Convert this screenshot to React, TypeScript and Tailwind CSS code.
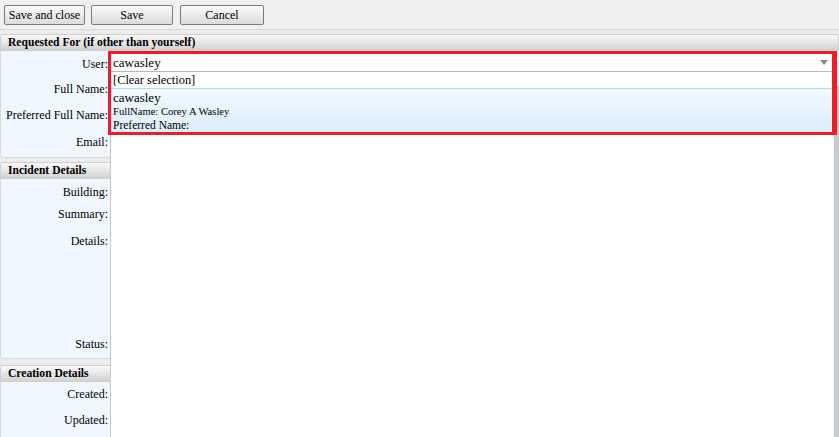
import React from 'react';

const serif = { fontFamily: '"Liberation Serif", "Times New Roman", serif' };

type RowDef = { label: string; h: number; pb?: number };

const SectionHeader: React.FC<{ title: string }> = ({ title }) => (
  <div className="h-[17px] px-[7px] flex items-center rounded-t-[3px] border border-[#cfcfcf] bg-gradient-to-b from-[#fafafa] to-[#d2d2d2] text-[11.6px] font-bold text-black leading-none">
    {title}
  </div>
);

const Row: React.FC<RowDef> = ({ label, h, pb }) => (
  <div className="flex" style={{ height: h }}>
    <div
      className={`w-[110px] shrink-0 bg-[#f0f7ff] flex ${pb !== undefined ? 'items-end' : 'items-center'} justify-end pr-[3px] text-[12px] text-black`}
      style={pb !== undefined ? { paddingBottom: pb } : undefined}
    >
      {label}
    </div>
    <div className="flex-1 bg-white" />
  </div>
);

const Section: React.FC<{ title: string; rows: RowDef[]; mt: number; border?: boolean }> = ({ title, rows, mt, border = true }) => (
  <div style={{ marginTop: mt }}>
    <SectionHeader title={title} />
    <div className={`rounded-bl-[4px] overflow-hidden border-l border-[#d8d8d8] ${border ? 'border-b' : ''}`}>
      {rows.map((r) => (
        <Row key={r.label} {...r} />
      ))}
    </div>
  </div>
);

const Btn: React.FC<{ label: string; w: number; ml: number }> = ({ label, w, ml }) => (
  <button
    className="h-[20px] border border-[#7a7a7a] rounded-[2px] bg-gradient-to-b from-[#fbfbfb] to-[#dcdcdc] text-[12px] text-black leading-none"
    style={{ width: w, marginLeft: ml }}
  >
    {label}
  </button>
);

export default function App() {
  return (
    <div className="relative w-[839px] h-[437px] overflow-hidden bg-[#ececec]" style={serif}>
      {/* toolbar */}
      <div className="h-[30px] flex items-center border-b border-[#d6d6d6] bg-[#f0f0f0]">
        <Btn label="Save and close" w={81} ml={4} />
        <Btn label="Save" w={82} ml={6} />
        <Btn label="Cancel" w={84} ml={7} />
      </div>

      <Section
        title="Requested For (if other than yourself)"
        mt={4}
        rows={[
          { label: 'User:', h: 25 },
          { label: 'Full Name:', h: 26 },
          { label: 'Preferred Full Name:', h: 26 },
          { label: 'Email:', h: 29, pb: 6 },
        ]}
      />
      <Section
        title="Incident Details"
        mt={4}
        rows={[
          { label: 'Building:', h: 26 },
          { label: 'Summary:', h: 18 },
          { label: 'Details:', h: 36 },
          { label: 'Status:', h: 99, pb: 5 },
        ]}
      />
      <Section
        title="Creation Details"
        mt={6}
        border={false}
        rows={[
          { label: 'Created:', h: 24 },
          { label: 'Updated:', h: 28 },
          { label: ' ', h: 10 },
        ]}
      />

      {/* dropdown overlay */}
      <div className="absolute left-[110px] top-[53px] w-[725px] bottom-0 bg-white border-l border-[#bcbcbc] border-r border-[#c8c8c8]">
        <div className="h-[19px] border-t border-[#a9dcf2] border-b border-[#b9b9b9] flex items-center pl-[2px] pr-[6px] text-[13px]">
          <span className="flex-1">cawasley</span>
          <svg width="8" height="5" viewBox="0 0 8 5">
            <path d="M0 0 H8 L4 5 Z" fill="#8a8a8a" />
          </svg>
        </div>
        <div className="h-[17px] border-b border-[#a9dcf2] flex items-center pl-[2px] text-[12.4px]">[Clear selection]</div>
        <div className="h-[44px] pl-[2px] pt-[1px] bg-gradient-to-b from-[#f2f9fe] to-[#dcedfb] leading-none">
          <div className="text-[13px] h-[15px] flex items-center">cawasley</div>
          <div className="text-[10.6px] h-[15px] flex items-center">FullName: Corey A Wasley</div>
          <div className="text-[11.5px] h-[12px] flex items-center">Preferred Name:</div>
        </div>
      </div>

      {/* right scrollbar edge */}
      <div className="absolute right-0 top-[86px] bottom-0 w-[4px] bg-[#c9ccd2]" />

      {/* highlight box */}
      <div className="absolute left-[108px] top-[51px] w-[729px] h-[84px] border-[3px] border-r-[5px] border-[#ee1c24] pointer-events-none" />
    </div>
  );
}
